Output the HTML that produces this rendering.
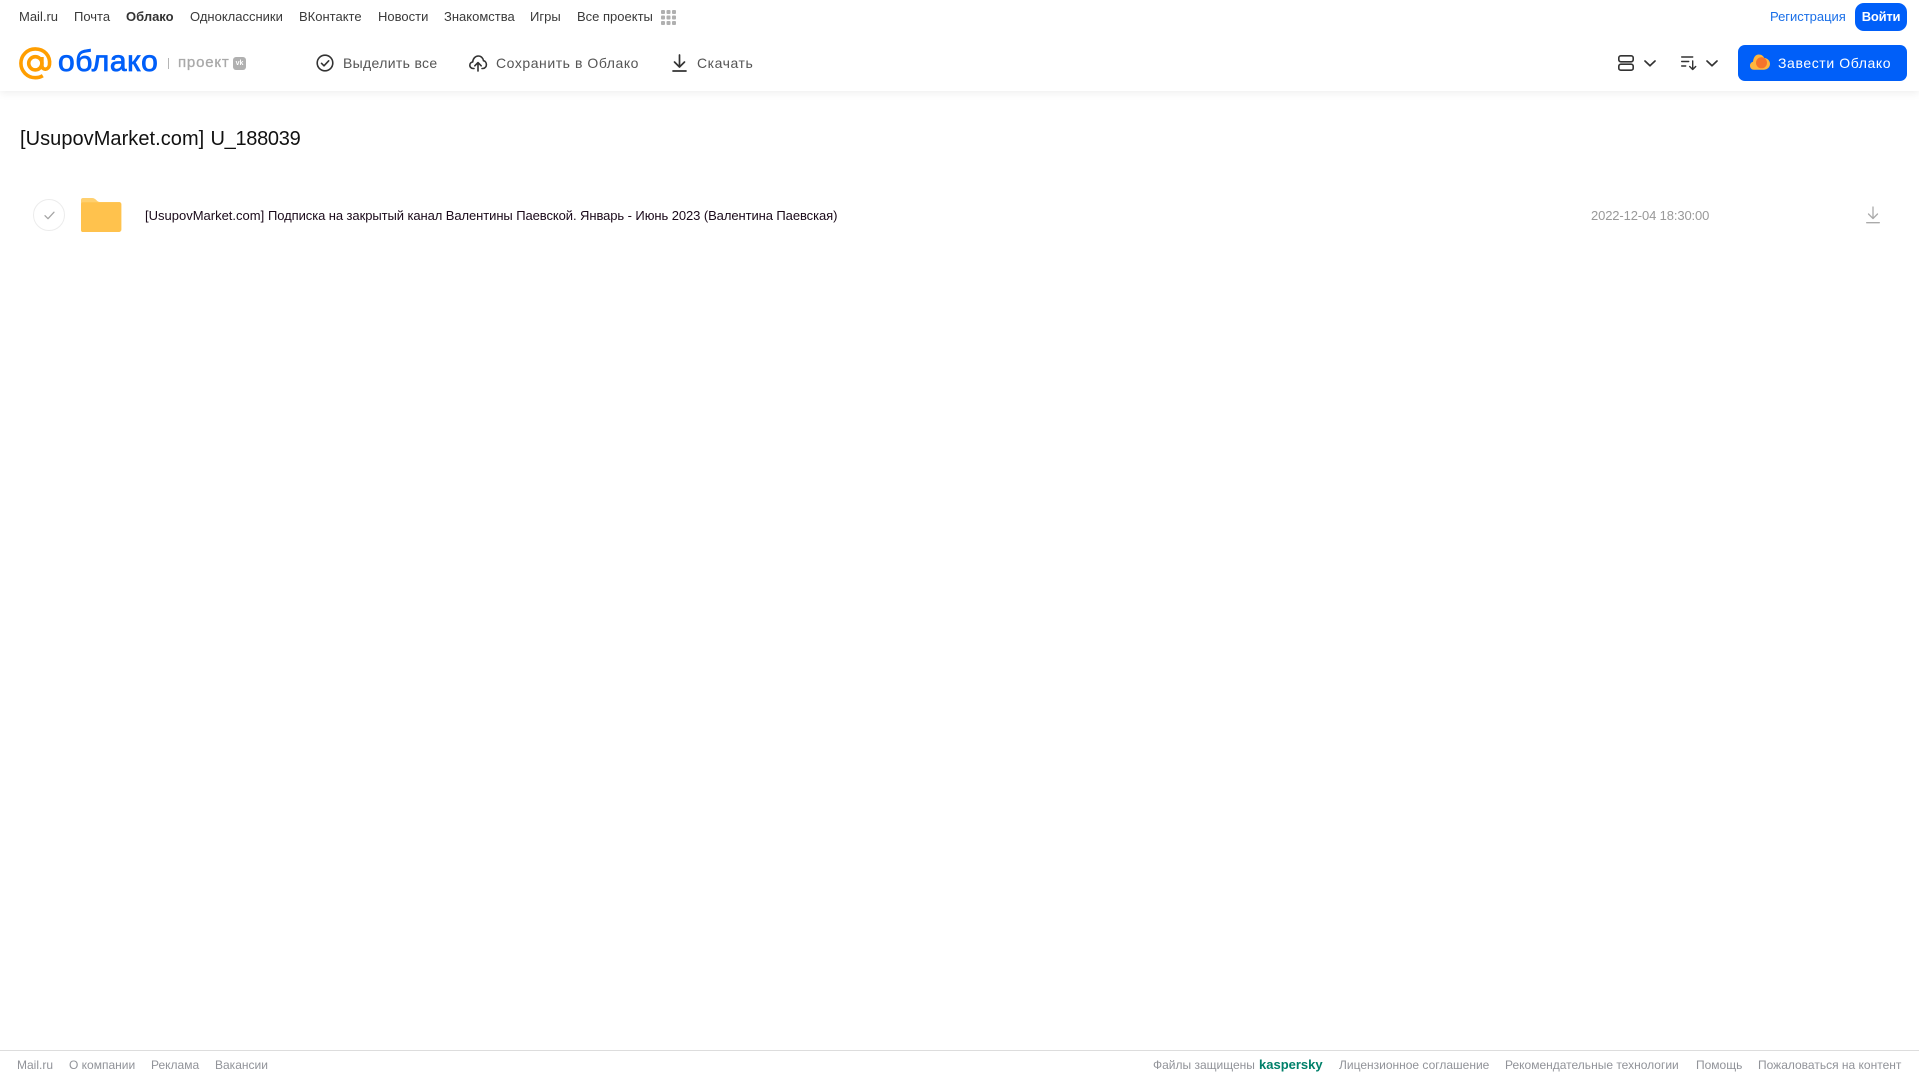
<!DOCTYPE html>
<html lang="ru"><head><meta charset="utf-8"><title>Облако</title>
<style>
html,body{margin:0;padding:0;background:#fff;width:1919px;height:1079px;overflow:hidden;font-family:"Liberation Sans",Arial,sans-serif}
.t{position:absolute;white-space:nowrap;line-height:18px}
.n{top:8px;font-size:13px;color:#3a3a3a}
.b{top:54px;font-size:14px;color:#555;letter-spacing:.55px}
.f{top:1056px;font-size:12px;color:#919399;line-height:18px}
svg{position:absolute;overflow:visible}
#hd{position:absolute;left:0;top:0;width:1919px;height:91px;background:#fff;box-shadow:0 2px 8px rgba(0,0,0,.07)}
</style></head><body>
<div id="hd"></div>
<span class="t n" style="left:19px">Mail.ru</span>
<span class="t n" style="left:74px">Почта</span>
<span class="t n" style="left:126px;font-weight:bold;color:#333">Облако</span>
<span class="t n" style="left:190px">Одноклассники</span>
<span class="t n" style="left:299px">ВКонтакте</span>
<span class="t n" style="left:378px">Новости</span>
<span class="t n" style="left:444px">Знакомства</span>
<span class="t n" style="left:530px">Игры</span>
<span class="t n" style="left:577px">Все проекты</span>
<svg style="left:661px;top:10px" width="15" height="15" fill="#b0b0b0"><rect width="4" height="4" rx="1"/><rect x="5.500" width="4" height="4" rx="1"/><rect x="11" width="4" height="4" rx="1"/><rect y="5.500" width="4" height="4" rx="1"/><rect x="5.500" y="5.500" width="4" height="4" rx="1"/><rect x="11" y="5.500" width="4" height="4" rx="1"/><rect y="11" width="4" height="4" rx="1"/><rect x="5.500" y="11" width="4" height="4" rx="1"/><rect x="11" y="11" width="4" height="4" rx="1"/></svg>

<svg style="left:19px;top:47px" width="33" height="33" viewBox="0 0 33 33" fill="none" stroke="#ff9e00" stroke-width="3.600"><circle cx="16.300" cy="16.300" r="6.600"/><path d="M22.900 10v8.500c0 5 6.900 5 7.600-.8C31.600 8.500 25 1.900 16.300 1.900 8.300 1.900 1.900 8.300 1.900 16.300s6.400 14.400 14.400 14.400c3 0 5.300-.7 7.500-2"/></svg>
<span class="t" style="left:58px;top:44px;font-size:30px;line-height:36px;color:#005ff9;-webkit-text-stroke:.8px #005ff9;letter-spacing:.6px">облако</span>
<div style="position:absolute;left:168px;top:58px;width:1px;height:11px;background:#b5b5b5"></div>
<span class="t" style="left:178px;top:54px;font-size:15px;color:#a9a9a9;-webkit-text-stroke:.3px #a9a9a9;letter-spacing:.8px">проект</span>
<div style="position:absolute;left:233px;top:57px;width:13px;height:13px;border-radius:3px;background:#b0b0b0;color:#fff;font-size:7px;font-weight:bold;line-height:13px;text-align:center">vk</div>

<svg style="left:316px;top:54px" width="18" height="18" viewBox="0 0 18 18" fill="none" stroke="#333" stroke-width="1.600"><circle cx="9" cy="9" r="7.800"/><path d="M5.500 9.300l2.500 2.500 4.700-5" stroke-linecap="round" stroke-linejoin="round"/></svg>
<span class="t b" style="left:343px;letter-spacing:.33px">Выделить все</span>
<svg style="left:469px;top:54px" width="18" height="18" viewBox="0 0 18 18" fill="none" stroke="#333" stroke-width="1.600" stroke-linecap="round" stroke-linejoin="round"><path d="M5 14.500H4.200C2 14.500 .8 12.800 .8 11.200c0-1.700 1.200-3 2.900-3.300C4 4.500 6.300 2 9.300 2c2.900 0 4.800 2.200 5.200 4.700 1.700.3 2.900 2 2.900 3.900 0 2-1.400 3.900-3.400 3.900H13"/><path d="M9 17V9M5.800 11.800L9 8.600l3.200 3.200"/></svg>
<span class="t b" style="left:496px">Сохранить в Облако</span>
<svg style="left:672px;top:54px" width="15" height="18" viewBox="0 0 15 18" fill="none" stroke="#333" stroke-width="1.700" stroke-linecap="round" stroke-linejoin="round"><path d="M7.500 1v11.500M2.500 8l5 5 5-5M1 17h13"/></svg>
<span class="t b" style="left:697px">Скачать</span>

<svg style="left:1618px;top:55px" width="16" height="16" viewBox="0 0 16 16" fill="none" stroke="#333" stroke-width="1.600"><rect x=".8" y=".8" width="14.400" height="6" rx="2"/><rect x=".8" y="9.200" width="14.400" height="6" rx="2"/></svg>
<svg style="left:1644px;top:60px" width="12" height="7" viewBox="0 0 12 7" fill="none" stroke="#333" stroke-width="1.700" stroke-linecap="round" stroke-linejoin="round"><path d="M1 1l5 4.700L11 1"/></svg>
<svg style="left:1681px;top:55px" width="16" height="16" viewBox="0 0 16 16" fill="none" stroke="#333" stroke-width="1.400" stroke-linecap="round" stroke-linejoin="round"><path d="M.7 2h11M.7 6.500h7M.7 11h4M11.700 6v8.500M8.700 11.500l3 3 3-3"/></svg>
<svg style="left:1706px;top:60px" width="12" height="7" viewBox="0 0 12 7" fill="none" stroke="#333" stroke-width="1.700" stroke-linecap="round" stroke-linejoin="round"><path d="M1 1l5 4.700L11 1"/></svg>

<span class="t n" style="left:1770px;color:#1a6fe8;letter-spacing:-.02px">Регистрация</span>
<div class="t" style="left:1855px;top:3px;width:52px;height:28px;line-height:27px;border-radius:9px;background:#005ff9;color:#fff;font-size:13px;font-weight:bold;letter-spacing:-.25px;text-align:center">Войти</div>
<div style="position:absolute;left:1738px;top:45px;width:169px;height:36px;border-radius:7px;background:#005ff9"></div>
<svg style="left:1750px;top:54px" width="20" height="16" viewBox="0 0 20 16"><path d="M4 15.700C1.700 15.700 0 14 0 11.700c0-2 1.300-3.500 3-3.900C3.400 3.500 5.500 .5 8.800 .5c2.600 0 4.600 1.400 5.500 3.500 3.300.2 5.700 2.800 5.700 5.800 0 3.300-2.600 5.900-6 5.900z" fill="#ffb63d"/><circle cx="11.500" cy="8.800" r="5.500" fill="#f5742b"/></svg>
<span class="t" style="left:1778px;top:54px;font-size:14px;color:#fff;letter-spacing:.6px">Завести Облако</span>

<span class="t" style="left:20px;top:127px;font-size:20px;line-height:24px;color:#111;letter-spacing:.05px">[UsupovMarket.com]</span>
<span class="t" style="left:210.500px;top:127px;font-size:20px;line-height:24px;color:#111;letter-spacing:-.3px">U_188039</span>
<div style="position:absolute;left:33px;top:199px;width:30px;height:30px;border:1px solid #ececec;border-radius:50%"></div>
<svg style="left:43.500px;top:211px" width="11" height="9" viewBox="0 0 11 9" fill="none" stroke="#a5a5a5" stroke-width="1.300" stroke-linecap="round" stroke-linejoin="round"><path d="M1 4.700l3 3 6-6.500"/></svg>
<svg style="left:81px;top:198px" width="40" height="34" viewBox="0 0 40 34"><path d="M2 0h9c2 0 3 .8 4.500 2.200 1 1 2 1.800 3.500 1.800h19c1.500 0 2.500 1 2.500 2.500V31c0 2-1 3-3 3H2c-1.500 0-2-1-2-2.500V2C0 .8 .8 0 2 0z" fill="#ffd06f"/><path d="M0 6.500C0 5 .8 4.300 2 4.300h36c1.300 0 2 .8 2 2V31c0 2-1 3-3 3H2c-1.500 0-2-1-2-2.500z" fill="#ffc24d"/></svg>
<span class="t" style="left:145px;top:207px;font-size:13px;color:#1a0a1a">[UsupovMarket.com]</span>
<span class="t" style="left:268px;top:207px;font-size:13px;color:#1a0a1a;letter-spacing:-.08px">Подписка на закрытый канал Валентины Паевской. Январь - Июнь 2023 (Валентина Паевская)</span>
<span class="t" style="left:1591px;top:207px;font-size:13px;color:#999;letter-spacing:-.13px">2022-12-04 18:30:00</span>
<svg style="left:1866px;top:206px" width="14" height="18" viewBox="0 0 14 18" fill="none" stroke="#aaa" stroke-width="1.300" stroke-linecap="round" stroke-linejoin="round"><path d="M7 1v11M2.500 8L7 12.500 11.500 8M.7 16.700h12.600"/></svg>

<div style="position:absolute;left:0;top:1050px;width:1919px;height:1px;background:#ddd"></div>
<span class="t f" style="left:17px">Mail.ru</span>
<span class="t f" style="left:69px">О компании</span>
<span class="t f" style="left:151px">Реклама</span>
<span class="t f" style="left:215px">Вакансии</span>
<span class="t f" style="left:1153px">Файлы защищены</span>
<span class="t f" style="left:1259px;font-size:13px;font-weight:bold;color:#00806a">kaspersky</span>
<span class="t f" style="left:1339px">Лицензионное соглашение</span>
<span class="t f" style="left:1505px">Рекомендательные технологии</span>
<span class="t f" style="left:1696px">Помощь</span>
<span class="t f" style="left:1758px">Пожаловаться на контент</span>
</body></html>
